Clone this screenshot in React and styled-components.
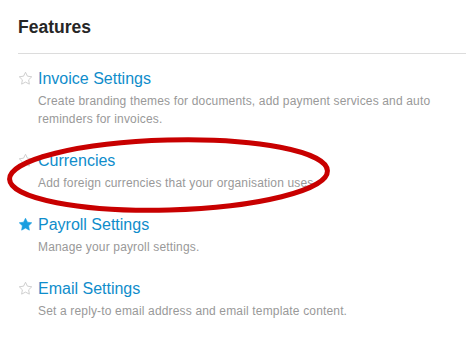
import React from "react";
import styled, { createGlobalStyle } from "styled-components";

const features = [
  {
    id: "invoice",
    title: "Invoice Settings",
    desc: "Create branding themes for documents, add payment services and auto reminders for invoices.",
    starred: false,
  },
  {
    id: "currencies",
    title: "Currencies",
    desc: "Add foreign currencies that your organisation uses.",
    starred: false,
  },
  {
    id: "payroll",
    title: "Payroll Settings",
    desc: "Manage your payroll settings.",
    starred: true,
  },
  {
    id: "email",
    title: "Email Settings",
    desc: "Set a reply-to email address and email template content.",
    starred: false,
  },
];

function Star({ filled }) {
  return (
    <StarIcon viewBox="0 0 24 24" $filled={filled}>
      <path d="M12 2l3.09 6.26L22 9.27l-5 4.87 1.18 6.88L12 17.77l-6.18 3.25L7 14.14 2 9.27l6.91-1.01L12 2z" />
    </StarIcon>
  );
}

export default function App() {
  return (
    <Page>
      <GlobalStyle />
      <Header>Features</Header>
      <List>
        {features.map((f) => (
          <Item key={f.id}>
            <Star filled={f.starred} />
            <Title href="#">{f.title}</Title>
            <Desc>{f.desc}</Desc>
          </Item>
        ))}
      </List>
      {/* red hand-drawn highlight over the Currencies row */}
      <Annotation viewBox="0 0 466 355">
        <ellipse
          cx="168.5"
          cy="175"
          rx="159"
          ry="35"
          transform="rotate(-1.5 168.5 175)"
        />
      </Annotation>
    </Page>
  );
}

const GlobalStyle = createGlobalStyle`
  html, body {
    margin: 0;
    background: #fff;
  }
  body {
    font-family: "Liberation Sans", Arial, sans-serif;
  }
`;

const Page = styled.div`
  position: relative;
  width: 466px;
  height: 355px;
  padding-left: 18px;
  box-sizing: border-box;
  overflow: hidden;
`;

const Header = styled.h2`
  margin: 0;
  padding: 16px 0 15px;
  font-size: 17.5px;
  line-height: 22px;
  font-weight: bold;
  color: #262626;
  border-bottom: 1px solid #dcdcdc;
`;

const List = styled.div`
  display: flex;
  flex-direction: column;
  gap: 23px;
  padding-top: 15px;
`;

const Item = styled.div`
  display: grid;
  grid-template-columns: 20px 1fr;
  row-gap: 3px;
`;

const StarIcon = styled.svg`
  width: 15px;
  height: 15px;
  margin-top: 2px;
  fill: ${(p) => (p.$filled ? "#1a9ee0" : "none")};
  stroke: ${(p) => (p.$filled ? "#1a9ee0" : "#c8c8c8")};
  stroke-width: ${(p) => (p.$filled ? 1 : 1.4)};
  stroke-linejoin: round;
`;

const Title = styled.a`
  font-size: 16px;
  line-height: 20px;
  color: #0f8dcb;
  text-decoration: none;
`;

const Desc = styled.div`
  grid-column: 2;
  font-size: 12px;
  line-height: 18px;
  letter-spacing: 0.16px;
  color: #999;
`;

const Annotation = styled.svg`
  position: absolute;
  left: 0;
  top: 0;
  width: 466px;
  height: 355px;
  pointer-events: none;

  ellipse {
    fill: none;
    stroke: #c80000;
    stroke-width: 5;
  }
`;
